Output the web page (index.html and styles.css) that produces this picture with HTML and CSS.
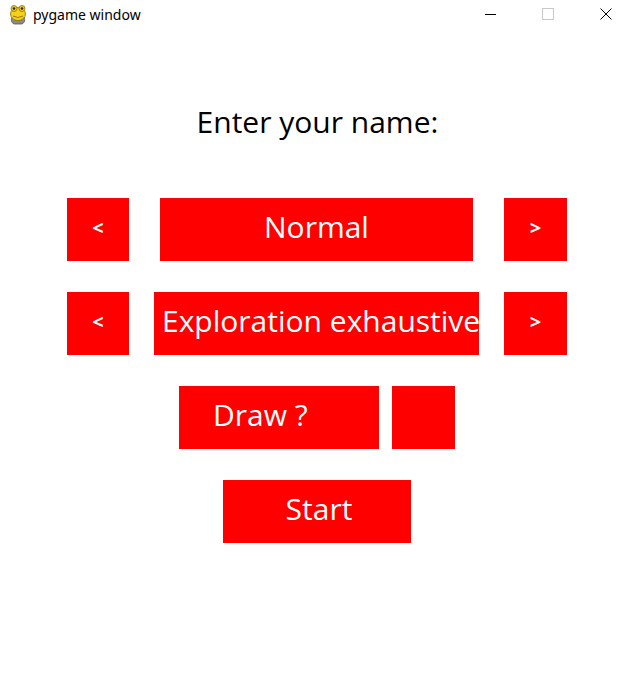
FILE: index.html
```html
<!DOCTYPE html>
<html lang="en">
<head>
<meta charset="utf-8">
<title>pygame window</title>
<link rel="stylesheet" href="styles.css">
</head>
<body>
<div class="window">
  <header class="titlebar">
    <div class="app">
      <svg class="app-icon" width="20" height="22" viewBox="0 0 20 22">
        <path d="M4 13 Q2 18 6 20 L14 20 Q18 18 16 13 Z" fill="#8a8a8a" stroke="#555" stroke-width="0.8"/>
        <path d="M5 15 L15 15" stroke="#c9c9c9" stroke-width="1.2"/>
        <ellipse cx="10" cy="10" rx="7.5" ry="6.5" fill="#f4d21c" stroke="#8a6d00" stroke-width="0.8"/>
        <circle cx="6" cy="4.5" r="3" fill="#f4d21c" stroke="#8a6d00" stroke-width="0.8"/>
        <circle cx="14" cy="4.5" r="3" fill="#f4d21c" stroke="#8a6d00" stroke-width="0.8"/>
        <circle cx="6" cy="4.5" r="1.3" fill="#222"/>
        <circle cx="14" cy="4.5" r="1.3" fill="#222"/>
        <path d="M5 12 Q10 15 15 12" fill="none" stroke="#8a6d00" stroke-width="0.9"/>
      </svg>
      <span class="app-title">pygame window</span>
    </div>
    <div class="controls">
      <span class="ctl">
        <svg width="12" height="12" viewBox="0 0 12 12"><path d="M1 6.5 H12" stroke="#000" stroke-width="1"/></svg>
      </span>
      <span class="ctl">
        <svg width="12" height="12" viewBox="0 0 12 12"><rect x="0.5" y="0.5" width="11" height="11" fill="none" stroke="#c8c8c8" stroke-width="1"/></svg>
      </span>
      <span class="ctl">
        <svg width="12" height="12" viewBox="0 0 12 12"><path d="M0.5 0.5 L11.5 11.5 M11.5 0.5 L0.5 11.5" stroke="#000" stroke-width="1"/></svg>
      </span>
    </div>
  </header>
  <main class="canvas">
    <h1 class="prompt">Enter your name:</h1>
    <div class="row row-mode">
      <div class="btn arrow arrow-left">&lt;</div>
      <div class="btn label mode">Normal</div>
      <div class="btn arrow arrow-right">&gt;</div>
    </div>
    <div class="row row-algo">
      <div class="btn arrow arrow-left">&lt;</div>
      <div class="btn label algo">Exploration exhaustive</div>
      <div class="btn arrow arrow-right">&gt;</div>
    </div>
    <div class="row row-draw">
      <div class="btn label draw">Draw ?</div>
      <div class="btn check"></div>
    </div>
    <div class="row row-start">
      <div class="btn label start">Start</div>
    </div>
  </main>
</div>
</body>
</html>
```

FILE: styles.css
```css
* {
  box-sizing: border-box;
}

html, body {
  margin: 0;
  padding: 0;
  background: #ffffff;
}

.window {
  width: 635px;
  height: 673px;
  display: flex;
  flex-direction: column;
  background: #ffffff;
  overflow: hidden;
}

.titlebar {
  height: 31px;
  flex: 0 0 31px;
  display: flex;
  align-items: center;
  justify-content: space-between;
  background: #ffffff;
}

.app {
  display: flex;
  align-items: center;
  padding-left: 8px;
  gap: 5px;
}

.app-icon {
  display: block;
  margin-top: -2px;
}

.app-title {
  font-family: "Noto Sans", "Open Sans", sans-serif;
  font-size: 14px;
  color: #000000;
  line-height: 18px;
  margin-top: -1px;
}

.controls {
  display: flex;
  height: 31px;
}

.ctl {
  width: 58px;
  height: 31px;
  display: flex;
  align-items: center;
  justify-content: center;
  padding-bottom: 3px;
}

.ctl svg {
  display: block;
}

.canvas {
  flex: 1;
  display: flex;
  flex-direction: column;
  align-items: center;
  padding-top: 76px;
  padding-right: 1px;
  font-family: "Comic Sans MS", "Open Sans", sans-serif;
}

.prompt {
  margin: 0 0 61px 0;
  font-size: 30px;
  line-height: 30px;
  font-weight: 400;
  color: #000000;
  height: 30px;
  white-space: nowrap;
  padding-left: 1px;
}

.row {
  display: flex;
  justify-content: center;
  height: 63px;
  margin-bottom: 31px;
  width: 100%;
}

.row-mode { gap: 31px; }
.row-algo { gap: 25px; }
.row-draw { gap: 13px; }

.btn {
  height: 63px;
  background: #ff0000;
  color: #ffffff;
  white-space: nowrap;
  overflow: hidden;
}

.label {
  font-size: 30px;
  line-height: 57px;
}

.arrow {
  width: 62px;
  font-size: 20px;
  font-weight: 700;
  line-height: 60px;
  text-align: center;
}

.arrow-right {
  width: 63px;
}

.mode {
  width: 313px;
  text-align: center;
}

.algo {
  width: 325px;
  padding-left: 8px;
  text-align: left;
}

.draw {
  width: 200px;
  padding-left: 34px;
  text-align: left;
}

.check {
  width: 63px;
}

.start {
  width: 188px;
  text-align: center;
  padding-left: 4px;
}
```
